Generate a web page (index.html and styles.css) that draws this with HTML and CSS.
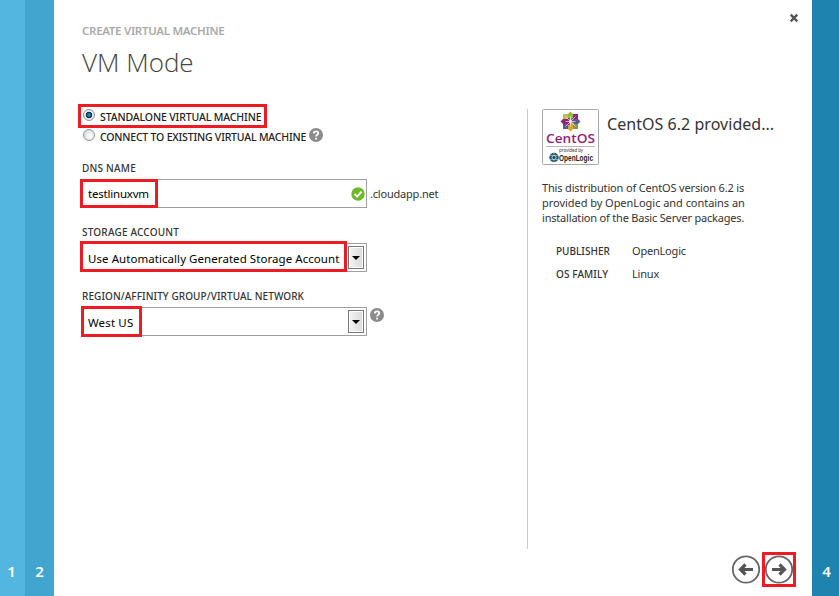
FILE: index.html
```
<!DOCTYPE html>
<html lang="en">
<head>
<meta charset="utf-8">
<title>Create Virtual Machine</title>
<link rel="stylesheet" href="styles.css">
</head>
<body>
<div class="wizard">
  <div class="step step-one">1</div>
  <div class="step step-two">2</div>
  <main class="page">
    <header class="header">
      <div>
        <p class="eyebrow"><span>CREATE VIRTUAL MACHINE</span></p>
        <h1>VM Mode</h1>
      </div>
      <svg class="close" viewBox="0 0 10 10"><path d="M1.7 1.7 8.3 8.3M8.3 1.7 1.7 8.3"/></svg>
    </header>
    <div class="content">
      <section class="form">
        <div class="option highlighted-option"><i class="radio checked"></i><span class="t-standalone">STANDALONE VIRTUAL MACHINE</span><b class="mark mark-option"></b></div>
        <div class="option"><i class="radio"></i><span class="t-connect">CONNECT TO EXISTING VIRTUAL MACHINE</span>
          <svg class="help" viewBox="0 0 14 14"><circle cx="7" cy="7" r="7"/><path d="M4.8 5.5C4.8 2.6 9.4 2.7 9.3 5.3 9.2 6.9 7.1 6.8 7.1 8.5M7.1 9.7V11.4"/></svg>
        </div>
        <label class="t-dns">DNS NAME</label>
        <div class="row">
          <div class="field"><span class="t-test">testlinuxvm</span>
            <svg class="valid" viewBox="0 0 14 14"><circle cx="7" cy="7" r="6.7"/><path d="M3.6 7 6.2 9.6 10.5 4.7"/></svg>
            <b class="mark mark-dns"></b></div>
          <span class="suffix">.cloudapp.net</span>
        </div>
        <label class="t-storage">STORAGE ACCOUNT</label>
        <div class="row">
          <div class="field"><span class="t-use">Use Automatically Generated Storage Account</span><i class="drop"></i><b class="mark mark-storage"></b></div>
        </div>
        <label class="t-region">REGION/AFFINITY GROUP/VIRTUAL NETWORK</label>
        <div class="row">
          <div class="field"><span class="t-west">West US</span><i class="drop"></i><b class="mark mark-region"></b></div>
          <svg class="help" viewBox="0 0 14 14"><circle cx="7" cy="7" r="7"/><path d="M4.8 5.5C4.8 2.6 9.4 2.7 9.3 5.3 9.2 6.9 7.1 6.8 7.1 8.5M7.1 9.7V11.4"/></svg>
        </div>
      </section>
      <aside class="details">
        <div class="image-title">
          <svg class="logo" viewBox="0 0 57 56">
            <rect x=".5" y=".5" width="56" height="55" rx="1" fill="#fff" stroke="#aaa"/>
            <g transform="translate(28.5 12.5)">
              <path d="M0-10 3.5-6.5V-1H-3.5V-6.5Z" fill="#96b83d"/>
              <path d="M10 0 6.5 3.5H1V-3.5H6.5Z" fill="#5b579b"/>
              <path d="M0 10-3.5 6.5V1H3.5V6.5Z" fill="#e4a22e"/>
              <path d="M-10 0-6.5-3.5H-1V3.5H-6.5Z" fill="#932279"/>
              <path d="M-7.5-7.5H-2.5V-2.5H-7.5Z" fill="#c7ba45"/><path d="M2.5-7.5H7.5V-2.5H2.5Z" fill="#932279"/>
              <path d="M2.5 2.5H7.5V7.5H2.5Z" fill="#7ba33d"/><path d="M-7.5 2.5H-2.5V7.5H-7.5Z" fill="#5b579b"/>
              <path d="M-5 0H5M0-5V5M-5-5 5 5M5-5-5 5" stroke="#fff" stroke-width=".6"/>
            </g>
            <text class="centos" x="4" y="34" textLength="49" lengthAdjust="spacingAndGlyphs">CentOS</text>
            <path d="M4 37.5H53" stroke="#b9b9b9"/>
            <text class="provided" x="17" y="42.5" textLength="24" lengthAdjust="spacingAndGlyphs">provided by</text>
            <circle cx="12" cy="48.5" r="4.7" fill="#24566b"/><path d="M8 46.5H16M8 50.5H16M12 44V53" stroke="#a9c5d0" stroke-width=".7"/><circle cx="12" cy="48.5" r="2" fill="#174a65" stroke="#d6e4e9" stroke-width=".8"/>
            <text class="openlogic" x="17" y="52" textLength="34" lengthAdjust="spacingAndGlyphs">OpenLogic</text>
          </svg>
          <h2>CentOS 6.2 provided...</h2>
        </div>
        <p class="description"><span class="d1">This distribution of CentOS version 6.2 is</span><br><span class="d2">provided by OpenLogic and contains an</span><br><span class="d3">installation of the Basic Server packages.</span></p>
        <dl><dt class="t-pub">PUBLISHER</dt><dd class="t-open">OpenLogic</dd><dt class="t-os">OS FAMILY</dt><dd class="t-linux">Linux</dd></dl>
      </aside>
    </div>
    <footer class="nav">
      <svg class="arrow" viewBox="0 0 30 30"><circle cx="15" cy="15.5" r="13.2"/><path d="M22 15.5H9.5M14.5 10.5 9.5 15.5 14.5 20.5"/></svg>
      <div class="next"><svg class="arrow" viewBox="0 0 30 30"><circle cx="15" cy="15.5" r="13.2"/><path d="M8 15.5H20.5M15.5 10.5 20.5 15.5 15.5 20.5"/></svg><b class="mark mark-next"></b></div>
    </footer>
  </main>
  <div class="step step-four">4</div>
</div>
</body>
</html>
```
FILE: styles.css
```
* { box-sizing: border-box; }
body { margin: 0; font-family: "Noto Sans", "Open Sans", sans-serif; font-size: 11px; color: #333; background: #fff; }
h1, h2, p, dl, dd { margin: 0; }
svg { display: block; flex: none; }
.wizard { display: grid; grid-template-columns: 25px 29px 758px 27px; height: 596px; overflow: hidden; }
.step { display: flex; align-items: flex-end; justify-content: center; padding-bottom: 14px; color: #fff; font-size: 15px; line-height: 22px; font-weight: 600; }
.step-one { background: #53b6e1; padding-right: 2px; }
.step-two { background: #41a5d0; }
.step-four { background: #1f83b0; padding-left: 2px; }
.page { display: flex; flex-direction: column; }
.header { display: flex; justify-content: space-between; height: 109px; padding: 22px 13px 0 28px; }
.eyebrow { font-size: 11.5px; line-height: 18px; font-weight: 600; letter-spacing: -.3px; color: #aaa; white-space: nowrap; }
h1 { font-family: "Open Sans", "Noto Sans", sans-serif; font-weight: 300; font-size: 26px; line-height: 34px; margin-top: 5px; color: #444; white-space: nowrap; }
.close { width: 10px; height: 10px; margin-top: -9px; fill: none; stroke: #555; stroke-width: 2.4; }
.content { display: grid; grid-template-columns: 473px 1fr; height: 440px; }
.form { padding-left: 28px; }
.option { position: relative; display: flex; align-items: center; height: 20px; margin-top: -2px; color: #222; white-space: nowrap; font-size: 10.5px; font-weight: 500; }
.option + .option { margin-top: 0; }
.t-standalone { letter-spacing: -.13px; }
.t-connect { letter-spacing: -.19px; }
.radio { width: 12px; height: 12px; margin: -4px 5px 0 1px; border: 1px solid #8d9499; border-radius: 50%; background: radial-gradient(circle at 65% 65%, #fff, #d3d3d3); }
.checked { background: radial-gradient(circle, #2b86b0 0 1px, #16384f 2.5px 3px, #e7edf0 3.6px); }
.help { width: 14px; height: 14px; }
.help circle { fill: #8b8b8b; }
.help path { fill: none; stroke: #fff; stroke-width: 1.8; }
.option .help { margin: -4px 0 0 3px; }
.row > .help { margin: 1px 0 0 3px; }
label { display: block; height: 18px; line-height: 14px; font-size: 10px; font-weight: 500; color: #333; white-space: nowrap; }
.t-dns { margin-top: 13px; padding-top: 1px; height: 19px; letter-spacing: .22px; }
.t-storage { letter-spacing: .2px; }
.t-region { letter-spacing: .08px; }
.row { display: flex; height: 29px; margin-bottom: 17px; }
.field { position: relative; display: flex; align-items: center; justify-content: space-between; width: 285px; height: 29px; padding: 0 2px 0 5px; border: 1px solid #a0a0a0; color: #000; font-size: 11.5px; white-space: nowrap; background: #fff; }
.field > span { line-height: 20px; padding-top: 2px; }
.field > .t-test { padding-top: 0; letter-spacing: -.2px; }
.t-use { letter-spacing: .06px; }
.t-west { letter-spacing: .15px; }
.valid { width: 14px; height: 14px; margin-right: -1px; }
.valid circle { fill: #6eb92b; }
.valid path { fill: none; stroke: #fff; stroke-width: 2; }
.suffix { margin-left: 3px; line-height: 30px; font-size: 11px; letter-spacing: -.2px; }
.drop { width: 16px; height: 23px; flex: none; border: 1px solid #777; background: linear-gradient(90deg, #f5f5f5, #dadada); box-shadow: inset 0 0 0 1px #fff; display: grid; place-items: center; }
.drop::after { content: ""; border: 4px solid transparent; border-top-color: #000; border-bottom: 0; }
.mark { position: absolute; border: 3px solid #ed1c24; pointer-events: none; }
.mark-option { left: -4px; top: -3px; width: 189px; height: 24px; }
.mark-dns { left: -3px; top: -1px; width: 78px; height: 29px; }
.mark-storage { left: -3px; top: -3px; width: 267px; height: 31px; }
.mark-region { left: -2px; top: -2px; width: 61px; height: 31px; }
.details { border-left: 1px solid #ccc; padding-left: 14px; }
.image-title { display: flex; height: 56px; }
.logo { width: 57px; height: 56px; }
.centos { font: 600 12px "Open Sans", sans-serif; fill: #932279; }
.provided { font: 5px "Noto Sans", sans-serif; fill: #333; }
.openlogic { font: bold 8.5px "Liberation Sans", sans-serif; fill: #222; }
h2 { margin-left: 8px; font-size: 16px; line-height: 30px; font-weight: 400; letter-spacing: .04px; white-space: nowrap; }
.description { margin-top: 15px; line-height: 15px; font-size: 11px; white-space: nowrap; }
.d1 { letter-spacing: -.16px; }
.d2 { letter-spacing: -.04px; }
.d3 { letter-spacing: -.19px; }
dl { display: grid; grid-template-columns: 76px auto; grid-template-rows: 23px 23px; margin: 15px 0 0 14px; line-height: 22px; white-space: nowrap; }
dt { font-size: 10px; font-weight: 500; }
.t-os { letter-spacing: .1px; }
dd { font-size: 11px; letter-spacing: -.2px; }
.nav { display: flex; gap: 3px; margin: 5px 0 0 677px; }
.next { position: relative; }
.arrow { width: 30px; height: 30px; }
.arrow circle { fill: none; stroke: #666; stroke-width: 1.8; }
.arrow path { fill: none; stroke: #555; stroke-width: 3.2; }
.mark-next { left: -2px; top: -2px; width: 34px; height: 35px; }
```
